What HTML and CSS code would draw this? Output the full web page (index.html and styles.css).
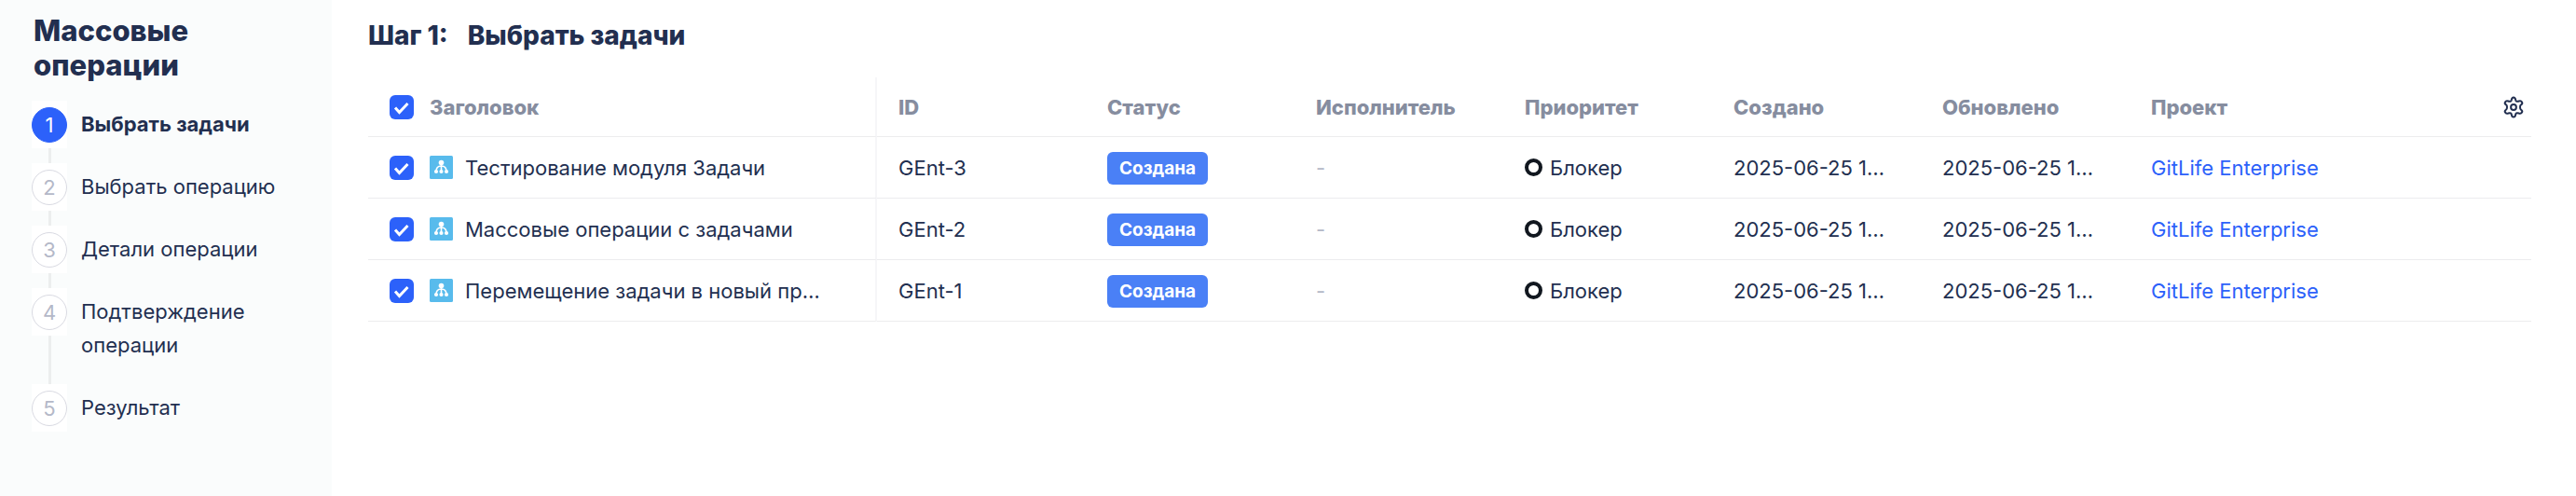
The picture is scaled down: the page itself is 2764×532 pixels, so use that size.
FILE: index.html
```html
<!DOCTYPE html>
<html lang="ru">
<head>
<meta charset="utf-8">
<meta name="viewport" content="width=device-width, initial-scale=1">
<title>Массовые операции</title>
<link rel="stylesheet" href="styles.css">
</head>
<body>
<svg class="sprite" aria-hidden="true">
  <symbol id="check" viewBox="0 0 26 26"><path d="M6 13.5l4.5 5L19.500 9" fill="none" stroke="#fff" stroke-width="3"/></symbol>
  <symbol id="epic" viewBox="0 0 25 25">
    <rect width="25" height="25" rx="1.500" fill="#58bbec"/>
    <g fill="none" stroke="#fff" stroke-width="1.600"><path d="M12.500 8v9M12.500 11c-3.500 0-5.500 2.500-5.500 6M12.500 11c3.500 0 5.500 2.500 5.500 6"/></g>
    <g fill="#fff"><circle cx="12.500" cy="7.500" r="2.800"/><circle cx="7" cy="17" r="2.100"/><circle cx="12.500" cy="17" r="2.100"/><circle cx="18" cy="17" r="2.100"/></g>
  </symbol>
</svg>
<div class="page">
  <aside class="sidebar">
    <h1 class="sidebar-title">Массовые операции</h1>
    <ol class="steps">
      <li class="step step-active"><span class="marker"><span class="number">1</span></span><span class="label">Выбрать задачи</span></li>
      <li class="step"><span class="marker"><span class="number">2</span></span><span class="label">Выбрать операцию</span></li>
      <li class="step"><span class="marker"><span class="number">3</span></span><span class="label">Детали операции</span></li>
      <li class="step"><span class="marker"><span class="number">4</span></span><span class="label">Подтверждение операции</span></li>
      <li class="step"><span class="marker"><span class="number">5</span></span><span class="label">Результат</span></li>
    </ol>
  </aside>
  <main class="content">
    <h2 class="heading"><span>Шаг 1:</span><span>Выбрать задачи</span></h2>
    <table class="tasks">
      <colgroup><col class="col-title"><col class="col"><col class="col"><col class="col"><col class="col"><col class="col"><col class="col"><col></colgroup>
      <thead>
        <tr>
          <th class="title-cell"><div class="line"><span class="check"><input type="checkbox" id="all" checked><svg><use href="#check"/></svg></span><label for="all">Заголовок</label></div></th>
          <th>ID</th><th>Статус</th><th>Исполнитель</th><th>Приоритет</th><th>Создано</th><th>Обновлено</th>
          <th><div class="last"><span>Проект</span><button class="settings" type="button" aria-label="Настройки"><svg viewBox="0 0 24 24"><path d="M9.800 4.200Q10.200 1.500 12 1.500T14.200 4.200Q14.400 5.300 15.500 5.700Q16.500 6.100 17.600 5.500Q20 4.600 21 6.400T19.800 9.500Q19 10.300 19 12T19.800 14.500Q22 15.900 21 17.600T17.600 18.500Q16.500 17.900 15.500 18.300Q14.400 18.700 14.200 19.800Q13.800 22.500 12 22.500T9.800 19.800Q9.600 18.700 8.500 18.300Q7.500 17.900 6.400 18.500Q4 19.400 3 17.600T4.200 14.500Q5 13.700 5 12T4.200 9.500Q2 8.100 3 6.400T6.400 5.500Q7.500 6.100 8.500 5.700Q9.600 5.300 9.800 4.200Z"/><circle cx="12" cy="12" r="2.900"/></svg></button></div></th>
        </tr>
      </thead>
      <tbody>
        <tr>
          <td class="title-cell"><div class="line"><span class="check"><input type="checkbox" id="t3" checked><svg><use href="#check"/></svg></span><svg class="type"><use href="#epic"/></svg><label for="t3">Тестирование модуля Задачи</label></div></td>
          <td>GEnt-3</td><td><span class="badge">Создана</span></td><td class="empty">-</td><td><div class="priority">Блокер</div></td><td>2025-06-25 1…</td><td>2025-06-25 1…</td><td><a href="#">GitLife Enterprise</a></td>
        </tr>
        <tr>
          <td class="title-cell"><div class="line"><span class="check"><input type="checkbox" id="t2" checked><svg><use href="#check"/></svg></span><svg class="type"><use href="#epic"/></svg><label for="t2">Массовые операции с задачами</label></div></td>
          <td>GEnt-2</td><td><span class="badge">Создана</span></td><td class="empty">-</td><td><div class="priority">Блокер</div></td><td>2025-06-25 1…</td><td>2025-06-25 1…</td><td><a href="#">GitLife Enterprise</a></td>
        </tr>
        <tr>
          <td class="title-cell"><div class="line"><span class="check"><input type="checkbox" id="t1" checked><svg><use href="#check"/></svg></span><svg class="type"><use href="#epic"/></svg><label for="t1">Перемещение задачи в новый пр…</label></div></td>
          <td>GEnt-1</td><td><span class="badge">Создана</span></td><td class="empty">-</td><td><div class="priority">Блокер</div></td><td>2025-06-25 1…</td><td>2025-06-25 1…</td><td><a href="#">GitLife Enterprise</a></td>
        </tr>
      </tbody>
    </table>
  </main>
</div>
</body>
</html>
```

FILE: styles.css
```css
*, *::before, *::after { box-sizing: border-box; }

body {
  margin: 0;
  background: #fff;
  color: #222f50;
  font: 22px/36px Inter, "Noto Sans", sans-serif;
}

.sprite { display: none; }

.page { display: flex; min-height: 100vh; }

/* Sidebar with the step list */
.sidebar {
  flex: 0 0 356px;
  padding: 14px 24px 24px 34px;
  background: #fafcfc;
}

.sidebar-title {
  width: min-content;
  margin: 0 0 20px 2px;
  font-size: 31px;
  font-weight: 800;
  line-height: 37px;
}

.steps { margin: 0; padding: 0; list-style: none; }

.step { display: flex; gap: 15px; }

.marker {
  flex: none;
  display: flex;
  flex-direction: column;
  align-items: center;
  width: 38px;
  padding-top: 7px;
  background: linear-gradient(#fff, #fff) top / 38px 51px no-repeat;
}

.number {
  display: grid;
  place-items: center;
  width: 38px;
  height: 38px;
  border: 1px solid #d9dae2;
  border-radius: 50%;
  background: #fff;
  color: #b4b8c8;
}

.step:not(:last-child) .marker::after {
  content: "";
  flex: 1;
  width: 3px;
  margin-top: 6px;
  background: #eceeee;
}

.label { padding: 7px 0 24px; }

.step-active .number { border-color: #2c61fa; background: #2c61fa; color: #fff; }
.step-active .label { font-weight: 700; }

/* Task table */
.content { flex: 1; min-width: 0; padding: 20px 48px 24px 39px; }

.heading {
  display: flex;
  gap: 21px;
  margin: 0 0 27px;
  font-size: 28px;
  font-weight: 800;
  line-height: 36px;
}

.tasks { width: 100%; table-layout: fixed; border-collapse: separate; border-spacing: 0; }

.col-title { width: 546px; }
.col { width: 224px; }

th, td {
  height: 66px;
  padding: 0 0 0 23px;
  border-bottom: 1px solid #ececee;
  text-align: left;
  white-space: nowrap;
}

th { height: 64px; color: #868d9f; font-weight: 800; }

.title-cell { border-right: 2px solid #f6f6f8; }

.line { display: flex; align-items: center; }

.check { display: grid; flex: none; width: 26px; height: 26px; margin-right: 17px; }
.check > * { grid-area: 1 / 1; width: 26px; height: 26px; margin: 0; }
.check input { appearance: none; border-radius: 6px; background: #2c61fa; }
.check svg { pointer-events: none; }

.type { flex: none; width: 25px; height: 25px; margin-right: 13px; }

.badge {
  display: inline-block;
  padding: 0 13px;
  border-radius: 6px;
  background: #4a80f6;
  color: #fff;
  font-size: 19px;
  font-weight: 700;
  line-height: 35px;
  vertical-align: middle;
}

.empty { color: #b4b8c8; }

.priority { display: flex; align-items: center; gap: 8px; }
.priority::before {
  content: "";
  width: 19px;
  height: 19px;
  border: 4px solid #11171f;
  border-radius: 50%;
}

a { color: #2c61fa; text-decoration: none; }

.last { display: flex; align-items: center; justify-content: space-between; padding-right: 7px; }

.settings { display: grid; padding: 0; border: 0; background: none; }
.settings svg { width: 24px; height: 24px; fill: none; stroke: #222f50; stroke-width: 2; }
```
